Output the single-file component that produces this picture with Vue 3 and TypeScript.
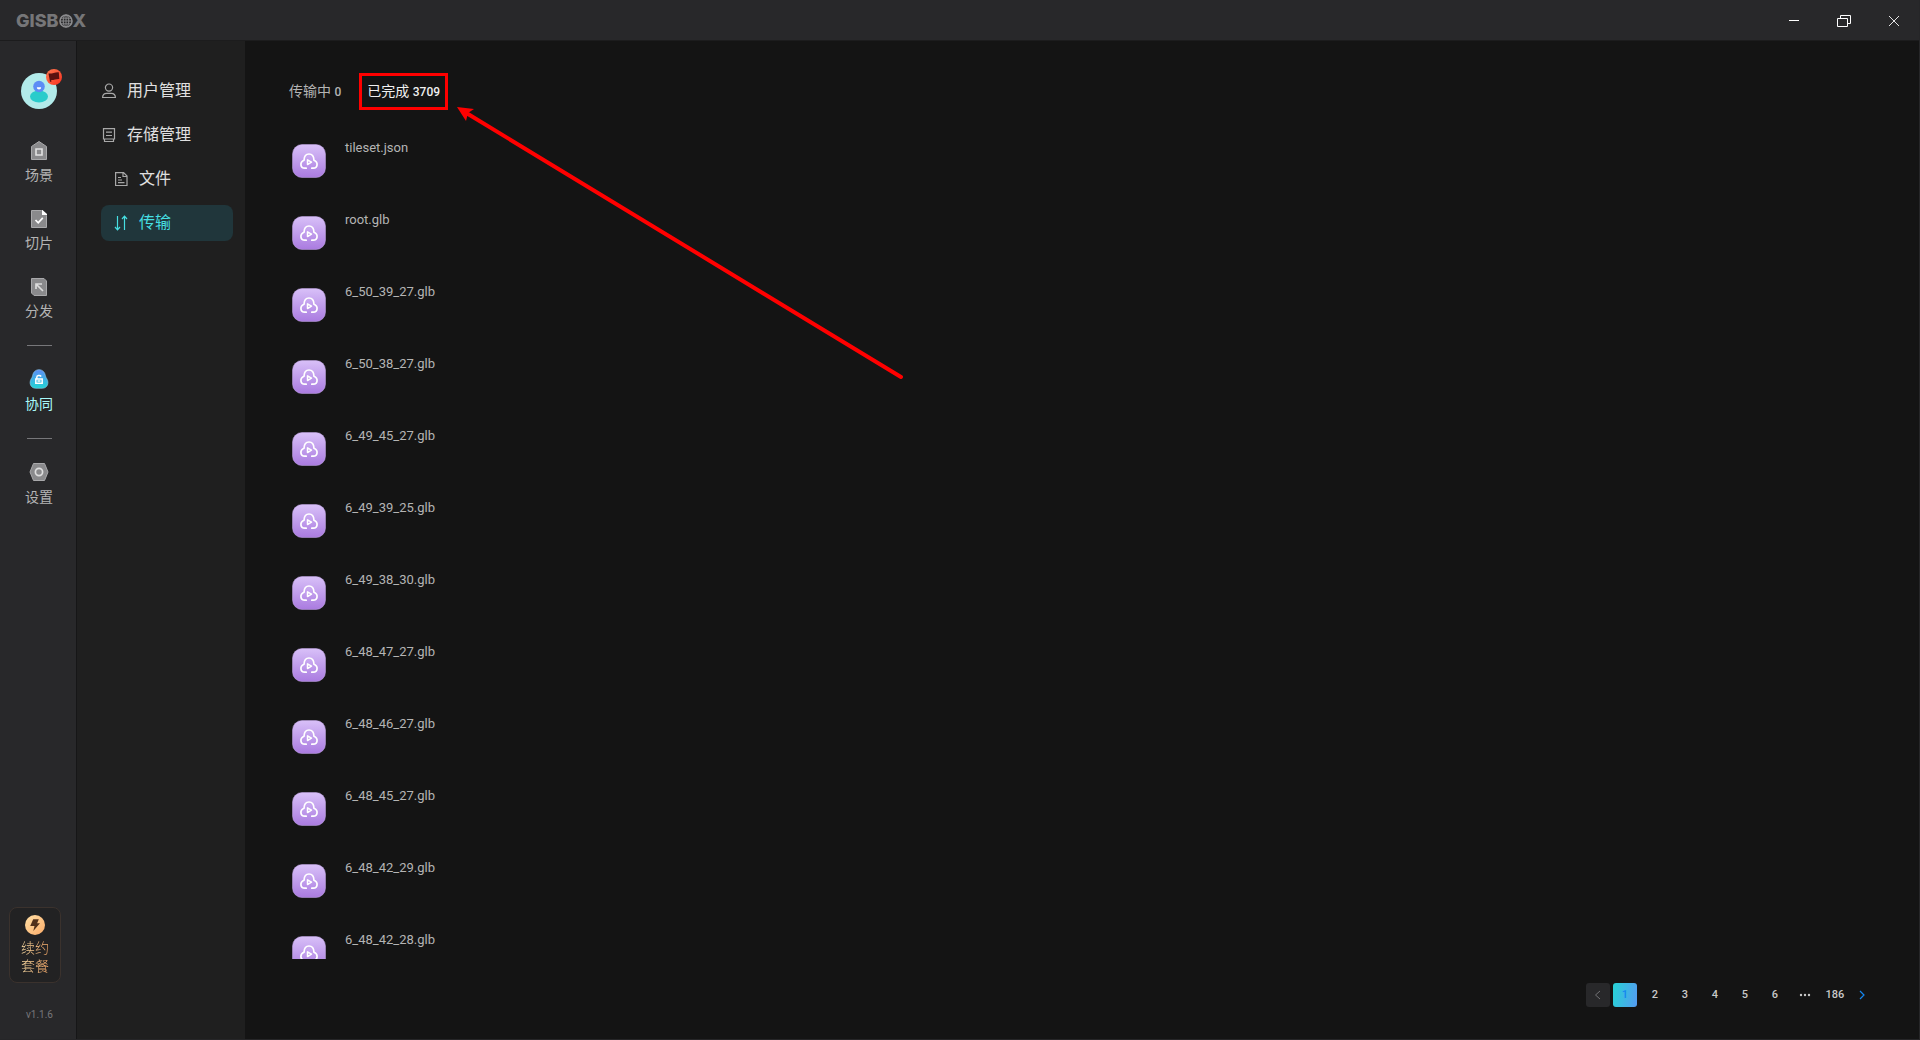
<script setup lang="ts">
import { ref } from 'vue'

interface RailItem {
  id: string
  label: string
}

const railMain: RailItem[] = [
  { id: 'scene', label: '场景' },
  { id: 'tile', label: '切片' },
  { id: 'publish', label: '分发' },
]

const files: string[] = [
  'tileset.json',
  'root.glb',
  '6_50_39_27.glb',
  '6_50_38_27.glb',
  '6_49_45_27.glb',
  '6_49_39_25.glb',
  '6_49_38_30.glb',
  '6_48_47_27.glb',
  '6_48_46_27.glb',
  '6_48_45_27.glb',
  '6_48_42_29.glb',
  '6_48_42_28.glb',
]

const pages: number[] = [1, 2, 3, 4, 5, 6]
const lastPage = 186
const page = ref(1)
</script>

<template>
  <div class="app">
    <header class="titlebar">
      <div class="logo">
        <span>GISB</span>
        <svg width="14" height="14" viewBox="0 0 14 14" fill="none" stroke="#8c8c8e" role="img" aria-label="O">
          <circle cx="7" cy="7" r="6" stroke-width="1.6" />
          <ellipse cx="7" cy="7" rx="2.8" ry="6" />
          <path d="M7 1v12M1 7h12M2 4.2h10M2 9.8h10" stroke-width=".9" />
        </svg>
        <span>X</span>
      </div>
      <div class="win">
        <button type="button" aria-label="最小化">
          <svg width="16" height="16" viewBox="0 0 16 16" stroke="#fff"><path d="M3 7.5h10" /></svg>
        </button>
        <button type="button" aria-label="还原">
          <svg width="16" height="16" viewBox="0 0 16 16" fill="none" stroke="#fff">
            <path d="M1.500 5.500h10v8h-10zM4.500 5.500v-3h10v8h-3" />
          </svg>
        </button>
        <button type="button" aria-label="关闭">
          <svg width="16" height="16" viewBox="0 0 16 16" stroke="#e4e4e4"><path d="M3 3l10 10M13 3L3 13" /></svg>
        </button>
      </div>
    </header>

    <div class="body">
      <nav class="rail">
        <button class="avatar" type="button" aria-label="账户">
          <svg width="36" height="36" viewBox="0 0 36 36">
            <circle cx="18" cy="18" r="18" fill="#b2ebea" />
            <ellipse cx="18" cy="23.500" rx="9" ry="6" fill="#29cccb" />
            <circle cx="18" cy="13.500" r="5.800" fill="#5d8cf5" />
            <path d="M15.800 14.200h4.400a2.200 2.400 0 0 1-4.400 0z" fill="#fff" />
          </svg>
          <svg class="flag" width="16" height="16" viewBox="0 0 16 16">
            <defs>
              <linearGradient id="flag-bg" x1="0" y1="0" x2="1" y2="1">
                <stop offset="0" stop-color="#ff7a50" />
                <stop offset="1" stop-color="#f8301f" />
              </linearGradient>
            </defs>
            <circle cx="8" cy="8" r="8" fill="url(#flag-bg)" />
            <path d="M2.500 4.500c3.500.6 6.500-1.600 10.300-1.200l.5 6.700c-3-.3-5.500 1.200-8.100 1l.2 1.700H4z" fill="#5b1210" />
          </svg>
        </button>

        <a v-for="item in railMain" :key="item.id" class="rail-item" href="#">
          <svg width="20" height="20" viewBox="0 0 20 20" fill="#8a8a8c" stroke="#a9a9ab">
            <template v-if="item.id === 'scene'">
              <path d="M2.500 6.500L10 1.500l7.500 5v13h-15z" />
              <path d="M7 9h6v6H7z" fill="none" stroke="#e2e2e2" stroke-width="1.600" />
            </template>
            <template v-else-if="item.id === 'tile'">
              <path d="M2.500 2.500h10l5 5v12h-15z" />
              <path d="M13 2h.5L18 6v1h-5z" fill="#fff" stroke="none" />
              <path d="M6.500 12l2.700 2.800 4.600-5" fill="none" stroke="#fff" stroke-width="1.700" />
            </template>
            <template v-else>
              <path d="M2.500 2.500h12.500l2.500 2.500v14.500h-12.500l-2.500-2.500z" />
              <path d="M7 13V8h6M7.500 8.500l6.500 6.500" fill="none" stroke="#dcdcdc" stroke-width="1.700" />
            </template>
          </svg>
          <span>{{ item.label }}</span>
        </a>

        <hr />

        <a class="rail-item current" href="#" aria-current="page">
          <svg width="20" height="20" viewBox="0 0 20 20">
            <defs>
              <linearGradient id="team-bg" x1="0" y1="0" x2="0" y2="1">
                <stop offset="0" stop-color="#5d8cf5" />
                <stop offset="1" stop-color="#22d5d5" />
              </linearGradient>
            </defs>
            <path
              d="M10 .7c3.600 0 5.800 2.500 6.300 5.600.2 1.500.8 2.300 1.600 3.600 2.400 4.200.4 9.400-4.600 9.400H6.700c-5 0-7-5.200-4.600-9.400.8-1.300 1.400-2.100 1.600-3.600C4.200 3.200 6.400.7 10 .7z"
              fill="url(#team-bg)" stroke="#8ccdf0" stroke-opacity=".6"
            />
            <path d="M6.800 10h6.400v4.200H6.800zM7.800 9.500V8.200c0-2 3.200-2.300 4.400-.7M8.500 12.100h3" fill="none" stroke="#fff" stroke-width="1.500" />
          </svg>
          <span>协同</span>
        </a>

        <hr />

        <a class="rail-item" href="#">
          <svg width="20" height="20" viewBox="0 0 20 20" fill="#8a8a8c" stroke="#a9a9ab">
            <path d="M4.500 1.500h11l3.500 8.500-3.500 8.500h-11L1 10z" />
            <circle cx="10" cy="10" r="3.600" fill="none" stroke="#dedede" stroke-width="1.700" />
          </svg>
          <span>设置</span>
        </a>

        <div class="rail-foot">
          <button class="renew" type="button">
            <svg width="20" height="20" viewBox="0 0 20 20">
              <defs>
                <linearGradient id="bolt-bg" x1="0" y1="0" x2="1" y2="1">
                  <stop offset="0" stop-color="#ffe0a6" />
                  <stop offset="1" stop-color="#fbab68" />
                </linearGradient>
              </defs>
              <circle cx="10" cy="10" r="10" fill="url(#bolt-bg)" />
              <path d="M8.200 4.200h5.600l-1.700 4h2.900L8.300 16l1.200-5H5.200z" fill="#51301a" />
            </svg>
            <span>续约</span>
            <span>套餐</span>
          </button>
          <span class="version">v1.1.6</span>
        </div>
      </nav>

      <aside class="menu">
        <a class="menu-item" href="#">
          <svg width="16" height="16" viewBox="0 0 16 16" fill="none" stroke="#a8a8a8" stroke-width="1.200">
            <circle cx="8" cy="4.600" r="3.600" />
            <path d="M1.600 14.500c0-3 1.800-4.200 4.200-4.200h4.400c2.400 0 4.200 1.200 4.200 4.200z" />
          </svg>
          <span>用户管理</span>
        </a>
        <a class="menu-item" href="#">
          <svg width="16" height="16" viewBox="0 0 16 16" fill="none" stroke="#a8a8a8" stroke-width="1.200">
            <path d="M2.500 1.600h11v10.400h-11zM3.500 12v2.500h9V12M5 5.200h6M5 8.500h6" />
          </svg>
          <span>存储管理</span>
        </a>
        <a class="menu-item sub" href="#">
          <svg width="16" height="16" viewBox="0 0 16 16" fill="none" stroke="#a8a8a8" stroke-width="1.200">
            <path d="M2.600 1.600h8L14 5v9.500H2.600zM10 2v3.500h3.800M5 6.500h3M5 9h4M5 11.700h6.500" />
          </svg>
          <span>文件</span>
        </a>
        <a class="menu-item sub active" href="#" aria-current="page">
          <svg width="16" height="16" viewBox="0 0 16 16" fill="none" stroke="#46dfe2" stroke-width="1.200">
            <path d="M4.500 1v13.500M2 12l2.500 2.800L7 12M11.500 15V1.500M9 4l2.500-2.800L14 4" />
          </svg>
          <span>传输</span>
        </a>
      </aside>

      <main class="main">
        <div class="tabs">
          <button class="tab" type="button">传输中 <span>0</span></button>
          <button class="tab marked" type="button">已完成 <span>3709</span></button>
        </div>

        <ul class="files">
          <li v-for="name in files" :key="name">
            <svg width="34" height="34" viewBox="0 0 34 34">
              <defs>
                <linearGradient id="file-bg" x1="0" y1="0" x2="0" y2="1">
                  <stop offset="0" stop-color="#d8c0f8" />
                  <stop offset="1" stop-color="#aa7be0" />
                </linearGradient>
              </defs>
              <rect x=".5" y=".5" width="33" height="33" rx="9.500" fill="url(#file-bg)" stroke="#c4a5e8" stroke-opacity=".5" />
              <path
                d="M14.200 24.200h-1.400c-4.700 0-5.300-6.300-.8-8 .2-4 2-6.200 5-6.200s4.800 2.200 5 6.200c4.500 1.700 3.900 8-.8 8h-1.400"
                fill="none" stroke="#fff" stroke-width="1.700" stroke-linecap="round"
              />
              <path d="M15.500 15.800v4.800l4-2.400z" fill="none" stroke="#fff" stroke-width="1.500" stroke-linejoin="round" />
            </svg>
            <span>{{ name }}</span>
          </li>
        </ul>

        <nav class="pager" aria-label="分页">
          <button class="step prev" type="button" disabled aria-label="上一页">
            <svg width="12" height="12" viewBox="0 0 12 12" fill="none" stroke="#727275"><path d="M8 2L3.500 6 8 10" /></svg>
          </button>
          <button
            v-for="n in pages" :key="n" class="num" :class="{ on: n === page }" type="button" @click="page = n"
          >{{ n }}</button>
          <button class="num" type="button" aria-label="更多">
            <svg width="12" height="12" viewBox="0 0 12 12" fill="#c9c9c9">
              <circle cx="2" cy="6" r="1.200" /><circle cx="6" cy="6" r="1.200" /><circle cx="10" cy="6" r="1.200" />
            </svg>
          </button>
          <button class="num" type="button">{{ lastPage }}</button>
          <button class="step" type="button" aria-label="下一页">
            <svg width="12" height="12" viewBox="0 0 12 12" fill="none" stroke="#1487f0" stroke-width="1.200"><path d="M4 2l4 4-4 4" /></svg>
          </button>
        </nav>

        <svg class="arrow" width="450" height="280" viewBox="0 0 450 280" aria-hidden="true">
          <path d="M12 8l433 263" stroke="#f00" stroke-width="4" stroke-linecap="round" />
          <path d="M1 1l17 2-6 4-2 8z" fill="#f00" />
        </svg>
      </main>
    </div>
  </div>
</template>

<style>
body {
  margin: 0;
  background: #141414;
}
</style>

<style scoped>
.app {
  display: flex;
  flex-direction: column;
  height: 100vh;
  box-sizing: border-box;
  border-right: 1px solid #262628;
  border-bottom: 1px solid #262628;
  background: #141414;
  color: #b4b4b4;
  font-family: Roboto, "Noto Sans CJK SC", sans-serif;
  font-size: 14px;
  line-height: 20px;
  overflow: hidden;
}
button {
  margin: 0;
  padding: 0;
  border: 0;
  background: none;
  color: inherit;
  font: inherit;
  cursor: pointer;
}
a {
  color: inherit;
  text-decoration: none;
}
svg {
  display: block;
  flex: none;
}

.titlebar {
  display: flex;
  flex: none;
  align-items: center;
  justify-content: space-between;
  box-sizing: border-box;
  height: 41px;
  padding: 1px 0 0 16px;
  border-bottom: 1px solid #1c1c1d;
  background: #28282a;
}
.logo {
  display: flex;
  align-items: center;
  color: #767678;
  font-family: Inter, sans-serif;
  font-size: 18px;
  font-weight: 800;
}
.win {
  display: flex;
}
.win button {
  display: flex;
  align-items: center;
  justify-content: center;
  width: 50px;
  height: 38px;
}

.body {
  display: flex;
  flex: 1;
  min-height: 0;
}
.rail {
  display: flex;
  flex: none;
  flex-direction: column;
  align-items: center;
  box-sizing: border-box;
  width: 77px;
  padding: 32px 0 0 2px;
  border-right: 1px solid #161617;
  background: #28282a;
}
.avatar {
  position: relative;
  margin-bottom: 31px;
}
.flag {
  position: absolute;
  top: -4px;
  right: -5px;
}
.rail-item {
  display: flex;
  flex-direction: column;
  align-items: center;
  gap: 5px;
  margin-bottom: 23px;
}
.rail-item.current {
  color: #a8fafa;
}
hr {
  width: 25px;
  height: 1px;
  margin: 1px 0 23px;
  border: 0;
  background: #77777a;
}
.rail-foot {
  display: flex;
  flex-direction: column;
  align-items: flex-start;
  align-self: stretch;
  margin-top: auto;
  padding: 0 0 14px 7px;
}
.renew {
  display: flex;
  flex-direction: column;
  align-items: center;
  box-sizing: border-box;
  width: 52px;
  height: 76px;
  padding-top: 7px;
  border: 1px solid #3b322d;
  border-radius: 8px;
  background: #222223;
  font-weight: 300;
  line-height: 18px;
}
.renew svg {
  margin-bottom: 4px;
}
.renew span {
  background: linear-gradient(90deg, #ffe0a6, #fbab68);
  background-clip: text;
  color: transparent;
}
.version {
  margin-top: 22px;
  padding-left: 17px;
  color: #77777a;
  font-size: 10px;
}

.menu {
  display: flex;
  flex: none;
  flex-direction: column;
  gap: 8px;
  box-sizing: border-box;
  width: 168px;
  padding: 32px 12px 0 24px;
  background: #1f1f1f;
}
.menu-item {
  display: flex;
  align-items: center;
  gap: 10px;
  height: 36px;
  border-radius: 8px;
  color: #e0e0e0;
  font-size: 16px;
}
.menu-item.sub {
  padding-left: 12px;
}
.menu-item.active {
  background: #20363b;
  color: #46dfe2;
}

.main {
  position: relative;
  display: flex;
  flex: 1;
  flex-direction: column;
  min-width: 0;
  padding: 32px 45px 32px 44px;
}
.tabs {
  display: flex;
  gap: 18px;
  height: 37px;
  margin-bottom: 27px;
}
.tab span {
  font-size: 12px;
  font-weight: 500;
}
.tab.marked {
  padding: 0 5px;
  border: 3px solid #f00;
  color: #f0f0f0;
}
.files {
  flex: 1;
  min-height: 0;
  margin: 0 0 24px;
  padding: 0;
  list-style: none;
  overflow: hidden;
}
.files li {
  display: flex;
  align-items: flex-start;
  gap: 19px;
  height: 72px;
  padding-left: 3px;
  font-size: 13px;
  line-height: 22px;
}
.files svg {
  margin-top: 7px;
}

.pager {
  display: flex;
  justify-content: flex-end;
  color: #c9c9c9;
  font-size: 11px;
  font-weight: 500;
}
.pager button {
  display: flex;
  align-items: center;
  justify-content: center;
  width: 24px;
  height: 24px;
  border-radius: 3px;
}
.pager .num {
  margin: 0 3px;
}
.pager .prev {
  background: #28282a;
}
.pager .on {
  background: linear-gradient(100deg, #26d3d5, #559bf2);
  color: #1487f0;
}
.arrow {
  position: absolute;
  top: 65px;
  left: 211px;
}
</style>
